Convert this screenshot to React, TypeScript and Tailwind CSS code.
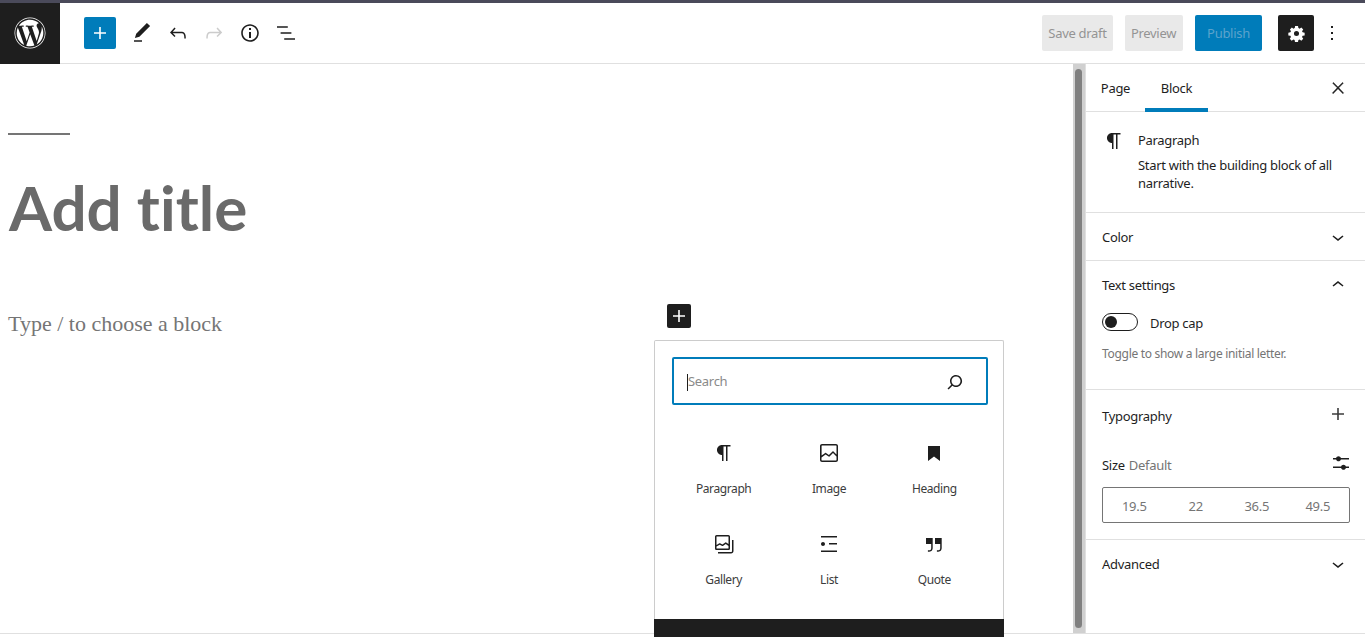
import React from "react";
import { FaWordpress } from "react-icons/fa";

const uiFont = "font-['Noto_Sans',sans-serif]";

const Icon = ({ d, size = 24, className = "" }: { d: string; size?: number; className?: string }) => (
  <svg viewBox="0 0 24 24" width={size} height={size} fill="currentColor" className={className}>
    <path fillRule="evenodd" d={d} />
  </svg>
);

const icons = {
  plus: "M18 11.2h-5.2V6h-1.6v5.2H6v1.6h5.2V18h1.6v-5.2H18z",
  pencil: "M20.1 5.1L16.9 2 6.2 12.7l-1.3 4.4 4.5-1.3L20.1 5.1zM4 20.8h8v-1.5H4v1.5z",
  undo: "M18.3 11.7c-.6-.6-1.4-.9-2.3-.9H6.7l2.9-3.3-1.1-1-4.5 5L8.5 16l1-1-2.7-2.7H16c.5 0 .9.2 1.3.5 1 1 1 3.4 1 4.5v.3h1.5v-.2c0-1.5 0-4.3-1.5-5.7z",
  redo: "M15.6 6.5l-1.1 1 2.9 3.3H8c-.9 0-1.7.3-2.3.9-1.4 1.5-1.4 4.2-1.4 5.6v.2h1.5v-.3c0-1.1 0-3.5 1-4.5.3-.3.7-.5 1.3-.5h9.2L14.5 15l1.1 1.1 4.6-4.6-4.6-5z",
  info: "M12 3.2c-4.8 0-8.8 3.9-8.8 8.8 0 4.8 3.9 8.8 8.8 8.8 4.8 0 8.8-3.9 8.8-8.8 0-4.8-4-8.8-8.8-8.8zm0 16c-4 0-7.2-3.3-7.2-7.2C4.8 8 8 4.8 12 4.8s7.2 3.3 7.2 7.2c0 4-3.2 7.2-7.2 7.2zM11 17h2v-6h-2v6zm0-8h2V7h-2v2z",
  listView: "M13.8 5.2H3v1.5h10.8V5.2zm-3.6 12v1.5H21v-1.5H10.2zm7.2-6H6.6v1.5h10.8v-1.5z",
  cog: "M12 2.6l1.9 0 .5 2.6c.5.2 1 .4 1.5.7l2.2-1.5 2.4 2.4-1.5 2.2c.3.5.5 1 .7 1.5l2.6.5v3.4l-2.6.5c-.2.5-.4 1-.7 1.5l1.5 2.2-2.4 2.4-2.2-1.5c-.5.3-1 .5-1.5.7l-.5 2.6h-3.8l-.5-2.6c-.5-.2-1-.4-1.5-.7l-2.2 1.5-2.4-2.4 1.5-2.2c-.3-.5-.5-1-.7-1.5l-2.6-.5v-3.4l2.6-.5c.2-.5.4-1 .7-1.5L3.7 6.800l2.4-2.400 2.200 1.500c.5-.3 1-.5 1.500-.7l.5-2.600zM12 8.800a3.200 3.200 0 1 0 0 6.400 3.200 3.200 0 0 0 0-6.400z",
  more: "M13 19h-2v-2h2v2zm0-6h-2v-2h2v2zm0-6h-2V5h2v2z",
  close: "M13 11.8l6.1-6.3-1-1-6.1 6.2-6.1-6.2-1 1 6.1 6.3-6.5 6.7 1 1 6.5-6.6 6.5 6.6 1-1z",
  paragraph: "m9.99609 14v-.2251l.00391.0001v6.225h1.5v-14.5h2.5v14.5h1.5v-14.5h3v-1.5h-8.50391c-2.76142 0-5 2.23858-5 5 0 2.7614 2.23858 5 5 5z",
  image: "M19 3H5c-1.1 0-2 .9-2 2v14c0 1.1.9 2 2 2h14c1.1 0 2-.9 2-2V5c0-1.1-.9-2-2-2zM5 4.500h14c.3 0 .5.2.5.5v8.400l-3-2.900c-.3-.3-.8-.3-1 0L11.900 14 9 12c-.3-.2-.6-.2-.8 0l-3.600 2.600V5c-.1-.3.1-.5.4-.5zm14 15H5c-.3 0-.5-.2-.5-.5v-2.400l4.100-3 3 1.900c.3.2.7.2.9-.1L16 12l3.500 3.400V19c0 .3-.2.5-.5.5z",
  heading: "M6 5h12v15l-6-4.500L6 20z",
  gallery: "M16.375 4.500H4.625a.125.125 0 0 0-.125.125v8.254l2.859-1.540a.75.75 0 0 1 .680-.016l2.384 1.142 2.890-2.074a.75.75 0 0 1 .874 0l2.313 1.660V4.625a.125.125 0 0 0-.125-.125zm.125 9.398-2.750-1.975-2.813 2.020a.75.75 0 0 1-.760.067l-2.444-1.170L4.500 14.583v1.792c0 .069.056.125.125.125h11.750a.125.125 0 0 0 .125-.125v-2.477zM4.625 3C3.728 3 3 3.728 3 4.625v11.750C3 17.273 3.728 18 4.625 18h11.750c.898 0 1.625-.727 1.625-1.625V4.625C18 3.728 17.273 3 16.375 3H4.625zM20 8v11c0 .69-.31 1-.999 1H6v1.500h13.001c1.520 0 2.499-.982 2.499-2.500V8H20z",
  list: "M4 4v1.500h16V4H4zm8 8.500h8V11h-8v1.500zM4 20h16v-1.500H4V20zm4-8c0-1.100-.9-2-2-2s-2 .9-2 2 .9 2 2 2 2-.9 2-2z",
  quote: "M13 6v6h5.200v4c0 .8-.2 1.400-.5 1.700-.6.6-1.600.6-2.500.5h-.3v1.500h.5c1 0 2.300-.1 3.300-1 .6-.6 1-1.600 1-2.800V6H13zm-9 6h5.200v4c0 .8-.2 1.400-.5 1.700-.6.6-1.600.6-2.500.5h-.3v1.500h.5c1 0 2.300-.1 3.300-1 .6-.6 1-1.600 1-2.800V6H4v6z",
  search: "M13 5c-3.300 0-6 2.700-6 6 0 1.400.5 2.700 1.300 3.700l-3.800 3.800 1.100 1.100 3.800-3.800c1 .8 2.300 1.300 3.700 1.300 3.300 0 6-2.700 6-6S16.300 5 13 5zm0 10.500c-2.500 0-4.500-2-4.500-4.500s2-4.500 4.500-4.500 4.500 2 4.500 4.500-2 4.500-4.500 4.500z",
  chevronDown: "M17.5 11.600L12 16l-5.500-4.400.9-1.200L12 14l4.500-3.600 1 1.200z",
  chevronUp: "M6.500 12.400L12 8l5.500 4.400-.9 1.200L12 10l-4.500 3.600-1-1.200z",
  sliders: "M14.500 13.800c-1.100 0-2.100.7-2.400 1.800H4V17h8.100c.3 1 1.300 1.800 2.400 1.800s2.100-.7 2.400-1.800H20v-1.500h-3.100c-.3-1-1.300-1.700-2.400-1.700zM11.900 7c-.3-1-1.300-1.800-2.400-1.800S7.400 6 7.100 7H4v1.500h3.100c.3 1 1.300 1.800 2.400 1.800s2.100-.7 2.400-1.800H20V7h-8.100z",
};

const blocks = [
  { name: "Paragraph", icon: icons.paragraph },
  { name: "Image", icon: icons.image },
  { name: "Heading", icon: icons.heading },
  { name: "Gallery", icon: icons.gallery },
  { name: "List", icon: icons.list },
  { name: "Quote", icon: icons.quote },
];

const Header = () => (
  <header className="flex h-[61px] shrink-0 items-center border-b border-[#e0e0e0] bg-white">
    <div className="flex h-[61px] w-[60px] items-center justify-center bg-[#1e1e1e] text-white">
      <FaWordpress size={32} />
    </div>
    <button className="ml-6 flex h-8 w-8 items-center justify-center rounded-[2px] bg-[#007cba] text-white">
      <Icon d={icons.plus} />
    </button>
    <div className="ml-[14px] flex items-center gap-3 text-[#1e1e1e]">
      <Icon d={icons.pencil} />
      <Icon d={icons.undo} />
      <Icon d={icons.redo} className="text-[#cccccc]" />
      <Icon d={icons.info} />
      <Icon d={icons.listView} />
    </div>
    <div className={`ml-auto flex items-center text-[13px] ${uiFont}`}>
      <button className="flex h-9 w-[71px] items-center justify-center rounded-[2px] bg-[#e9e9e9] pt-[1px] tracking-[-0.3px] text-[#949494]">
        Save draft
      </button>
      <button className="ml-3 flex h-9 w-[58px] items-center justify-center rounded-[2px] bg-[#e9e9e9] pr-[1px] pt-[1px] tracking-[-0.3px] text-[#949494]">
        Preview
      </button>
      <button className="ml-3 flex h-9 w-[67px] items-center justify-center rounded-[2px] bg-[#007cba] pt-[1px] tracking-[-0.3px] text-[#5ba3cc]">
        Publish
      </button>
      <button className="ml-4 flex h-9 w-9 items-center justify-center rounded-[2px] bg-[#1e1e1e] text-white">
        <Icon d={icons.cog} size={19} />
      </button>
      <div className="ml-[6px] mr-[21px] text-[#1e1e1e]">
        <Icon d={icons.more} />
      </div>
    </div>
  </header>
);

const Inserter = () => (
  <div className={`absolute left-[654px] top-[276px] h-[320px] w-[350px] overflow-hidden rounded-t-[2px] border border-b-0 border-[#cccccc] bg-white ${uiFont}`}>
    <div className="ml-[17px] mr-[15px] mt-4 flex h-12 items-center rounded-[2px] border-2 border-[#007cba] pl-[13px] pr-[19px] pt-[2px]">
      <span className="h-[17px] w-px bg-[#1e1e1e]" />
      <span className="text-[13px] tracking-[-0.3px] text-[#8a8a8a]">Search</span>
      <Icon d={icons.search} className="ml-auto text-[#1e1e1e]" />
    </div>
    <div className="mt-[33px] grid grid-cols-3 px-[16px]">
      {blocks.map((b) => (
        <div key={b.name} className="flex h-[91px] flex-col items-center pt-[3px] text-[#1e1e1e]">
          <Icon d={b.icon} />
          <span className="mt-[14px] text-[12px] leading-[20px] tracking-[-0.4px] text-[#3c3c3c]">{b.name}</span>
        </div>
      ))}
    </div>
  </div>
);

const Panel = ({ title, open = false }: { title: string; open?: boolean }) => (
  <div className="flex h-12 items-center justify-between border-t border-[#e0e0e0] pl-4 pr-[15px]">
    <span className="mt-[2px] text-[13px] tracking-[-0.3px] text-[#1e1e1e]">{title}</span>
    <Icon d={open ? icons.chevronUp : icons.chevronDown} className="text-[#1e1e1e]" />
  </div>
);

const Sidebar = () => (
  <aside className={`flex w-[280px] shrink-0 flex-col border-l border-[#e0e0e0] bg-white ${uiFont}`}>
    <div className="flex h-12 shrink-0 items-center border-b border-[#e0e0e0] text-[13px] tracking-[-0.3px] text-[#1e1e1e]">
      <span className="flex h-12 w-[59px] items-center justify-center pt-[3px]">Page</span>
      <span className="relative flex h-12 w-[63px] items-center justify-center pt-[3px]">
        Block
        <span className="absolute inset-x-0 bottom-0 h-[4px] bg-[#007cba]" />
      </span>
      <Icon d={icons.close} size={18} className="ml-auto mr-[18px] stroke-current stroke-[0.6]" />
    </div>
    <div className="flex h-[100px] shrink-0 pl-4 pt-[20px] text-[#1e1e1e]">
      <Icon d={icons.paragraph} className="-mt-[3px] mr-3 w-6 shrink-0" />
      <div className="text-[13px] leading-[18px] tracking-[-0.3px]">
        <p className="-mt-[1px]">Paragraph</p>
        <p className="mt-[7px] w-[205px]">Start with the building block of all narrative.</p>
      </div>
    </div>
    <Panel title="Color" />
    <div className="h-[129px] shrink-0">
      <Panel title="Text settings" open />
      <div className="flex h-[23px] items-center pl-4 pt-[5px]">
        <span className="flex h-[18px] w-9 items-center rounded-full border border-[#1e1e1e] pl-[2px]">
          <span className="h-3 w-3 rounded-full bg-[#1e1e1e]" />
        </span>
        <span className="ml-3 mt-[2px] text-[13px] leading-[18px] tracking-[-0.3px] text-[#1e1e1e]">Drop cap</span>
      </div>
      <p className="ml-4 mt-[14px] text-[12px] leading-[18px] tracking-[-0.3px] text-[#757575]">
        Toggle to show a large initial letter.
      </p>
    </div>
    <div className="h-[150px] shrink-0 border-t border-[#e0e0e0] px-4">
      <div className="flex h-[48px] items-center justify-between text-[#1e1e1e]">
        <span className="mt-[6px] text-[13px] tracking-[-0.3px]">Typography</span>
        <Icon d={icons.plus} className="-mr-[1px] -mt-[1px] text-[#3c3c3c]" />
      </div>
      <div className="mt-[15px] flex h-[24px] items-center justify-between">
        <span className="mt-[2px] text-[13px] tracking-[-0.3px] text-[#1e1e1e]">
          Size <span className="ml-[1px] text-[#757575]">Default</span>
        </span>
        <Icon d={icons.sliders} className="-mr-[4px] -mt-[4px] text-[#1e1e1e]" />
      </div>
      <div className="mt-[10px] grid h-9 w-[248px] grid-cols-4 items-center rounded-[2px] border border-[#757575] pt-[4px] text-center text-[13px] tracking-[-0.3px] text-[#757575]">
        <span className="pl-[1px]">19.5</span>
        <span className="pl-[1px]">22</span>
        <span>36.5</span>
        <span className="pr-[1px]">49.5</span>
      </div>
    </div>
    <Panel title="Advanced" />
  </aside>
);

const App = () => (
  <div className="flex h-[637px] w-[1365px] flex-col overflow-hidden bg-white">
    <div className="h-[3px] shrink-0 bg-[#4a4a5a]" />
    <Header />
    <div className="flex h-[570px] shrink-0 border-b border-[#e0e0e0]">
      <main className="relative min-w-0 flex-1 bg-white">
        <div className="ml-2 mt-[69px] h-[2px] w-[62px] bg-[#757575]" />
        <h1 className="ml-[9px] mt-[36px] font-['Lato',sans-serif] text-[62px] font-bold leading-[72px] text-[#6a6a6a] [font-variant-ligatures:none]">
          Add title
        </h1>
        <p className="ml-2 mt-[64px] font-['Liberation_Serif',serif] text-[22px] leading-[33px] text-[#757575]">
          Type / to choose a block
        </p>
        <button className="absolute left-[667px] top-[240px] flex h-6 w-6 items-center justify-center rounded-[2px] bg-[#1e1e1e] text-white">
          <Icon d={icons.plus} />
        </button>
        <Inserter />
        <div className={`absolute left-[654px] top-[555px] h-[18px] w-[350px] overflow-hidden bg-[#1e1e1e] ${uiFont}`}>
          <span className="block pt-[14px] text-center text-[13px] leading-[18px] text-white">Browse all</span>
        </div>
      </main>
      <div className="flex w-[12px] shrink-0 justify-center bg-[#d0d0d0] py-[5px] pr-[1px]">
        <div className="w-[7px] rounded-full bg-[#808080]" />
      </div>
      <Sidebar />
    </div>
  </div>
);

export default App;
